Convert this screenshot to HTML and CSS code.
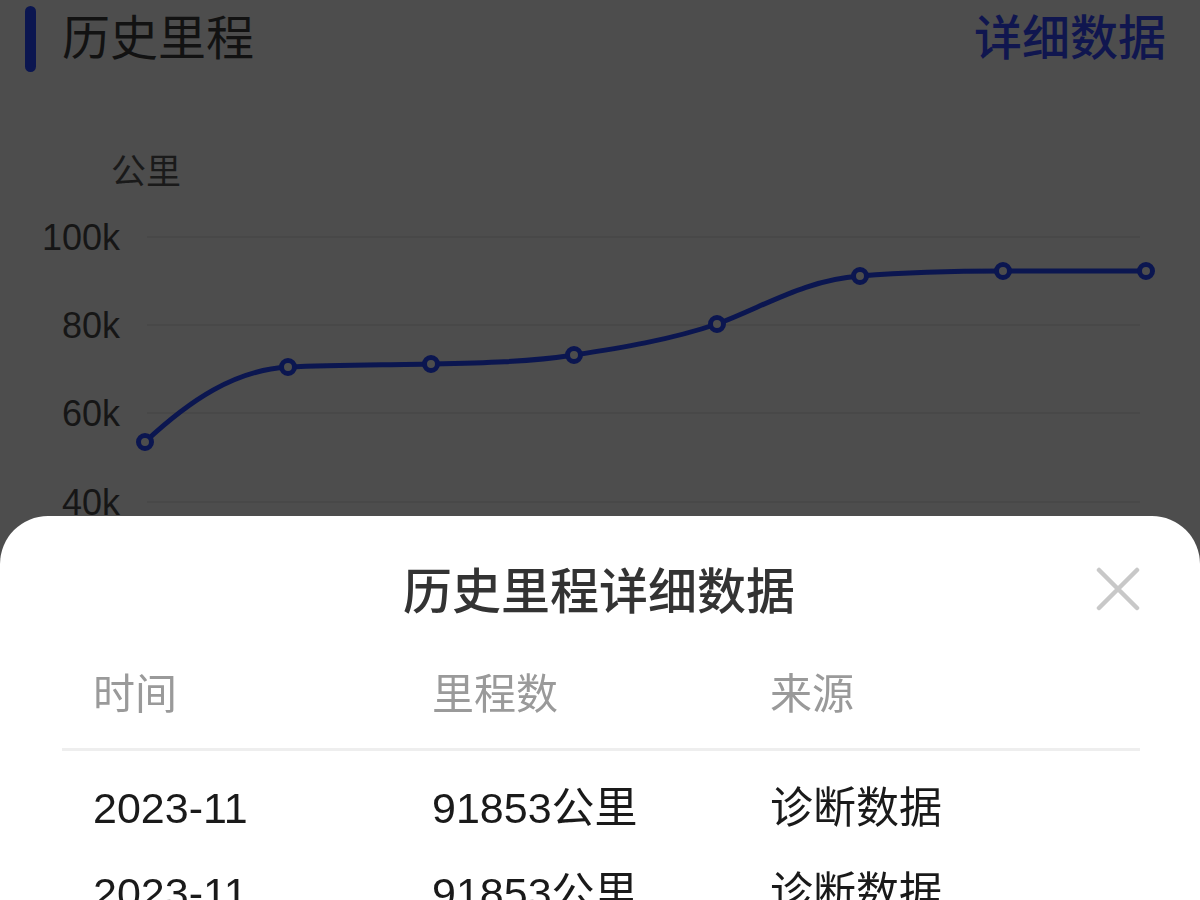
FILE: index.html
```html
<!DOCTYPE html>
<html lang="zh-CN">
<head>
<meta charset="utf-8">
<title>历史里程</title>
<link rel="stylesheet" href="styles.css">
</head>
<body>
<div class="page">
  <header class="section-head">
    <span class="accent"></span>
    <h1 class="section-title">历史里程</h1>
    <a class="detail-link">详细数据</a>
  </header>

  <div class="chart">
    <div class="unit">公里</div>
    <svg class="chart-svg" width="1200" height="444" viewBox="0 72 1200 444">
      <g class="grid">
        <line x1="147" y1="237" x2="1140" y2="237"/>
        <line x1="147" y1="325" x2="1140" y2="325"/>
        <line x1="147" y1="413" x2="1140" y2="413"/>
        <line x1="147" y1="502" x2="1140" y2="502"/>
      </g>
      <g class="ylabels">
        <text x="120" y="237">100k</text>
        <text x="120" y="325">80k</text>
        <text x="120" y="413">60k</text>
        <text x="120" y="502">40k</text>
      </g>
      <path class="series" d="M145,442 C190,400 235,370 288,367 C335,365 385,365 431,364 C480,363 530,362 574,355 C620,348 670,340 717,324 C765,306 805,280 860,276 C910,272 960,271 1003,271 L1146,271"/>
      <g class="dots">
        <circle cx="145" cy="442" r="6.5"/>
        <circle cx="288" cy="367" r="6.5"/>
        <circle cx="431" cy="364" r="6.5"/>
        <circle cx="574" cy="355" r="6.5"/>
        <circle cx="717" cy="324" r="6.5"/>
        <circle cx="860" cy="276" r="6.5"/>
        <circle cx="1003" cy="271" r="6.5"/>
        <circle cx="1146" cy="271" r="6.5"/>
      </g>
    </svg>
  </div>
</div>

<section class="sheet">
  <div class="sheet-head">
    <h2 class="sheet-title">历史里程详细数据</h2>
    <button class="close" aria-label="关闭">
      <svg width="44" height="44" viewBox="0 0 44 44">
        <path d="M3 3 L41 41 M41 3 L3 41"/>
      </svg>
    </button>
  </div>
  <div class="table">
    <div class="row head-row">
      <div class="cell">时间</div>
      <div class="cell">里程数</div>
      <div class="cell">来源</div>
    </div>
    <div class="row">
      <div class="cell">2023-11</div>
      <div class="cell">91853公里</div>
      <div class="cell">诊断数据</div>
    </div>
    <div class="row">
      <div class="cell">2023-11</div>
      <div class="cell">91853公里</div>
      <div class="cell">诊断数据</div>
    </div>
  </div>
</section>
</body>
</html>
```

FILE: styles.css
```css
html, body {
  margin: 0;
  padding: 0;
  width: 1200px;
  height: 900px;
  overflow: hidden;
  background: #4d4d4d;
  font-family: "Liberation Sans", "Noto Sans CJK SC", sans-serif;
}

.page {
  width: 1200px;
}

.section-head {
  display: flex;
  align-items: center;
  height: 66px;
  padding: 6px 34px 0 25px;
}

.accent {
  width: 11px;
  height: 66px;
  border-radius: 6px;
  background: #0b1650;
  flex: none;
}

.section-title {
  margin: 0 0 0 26px;
  font-size: 48px;
  font-weight: 400;
  line-height: 66px;
  color: #121212;
  flex: 1;
}

.detail-link {
  font-size: 48px;
  line-height: 66px;
  font-weight: 500;
  color: #10164f;
}

.chart {
  position: relative;
  height: 444px;
}

.unit {
  position: absolute;
  left: 111px;
  top: 78px;
  font-size: 35px;
  line-height: 44px;
  color: #1a1a1a;
}

.chart-svg {
  display: block;
}

.grid line {
  stroke: #484848;
  stroke-width: 2;
}

.ylabels text {
  font-family: "Liberation Sans", sans-serif;
  font-size: 36px;
  fill: #161616;
  text-anchor: end;
  dominant-baseline: central;
}

.series {
  fill: none;
  stroke: #0b1650;
  stroke-width: 5;
  stroke-linecap: round;
}

.dots circle {
  fill: #4d4d4d;
  stroke: #0b1650;
  stroke-width: 5;
}

.sheet {
  position: fixed;
  left: 0;
  right: 0;
  top: 516px;
  bottom: 0;
  background: #ffffff;
  border-radius: 48px 48px 0 0;
  padding: 0 60px 0 62px;
}

.sheet-head {
  position: relative;
  padding-top: 46px;
  height: 60px;
}

.sheet-title {
  margin: 0 0 0 -4px;
  text-align: center;
  font-size: 49px;
  font-weight: 500;
  line-height: 60px;
  color: #333333;
}

.close {
  position: absolute;
  right: 0;
  top: 51px;
  width: 44px;
  height: 44px;
  padding: 0;
  border: none;
  background: none;
}

.close svg {
  display: block;
}

.close path {
  stroke: #c8c8c8;
  stroke-width: 4.5;
  stroke-linecap: round;
  fill: none;
}

.table {
  margin-top: 43px;
}

.row {
  display: grid;
  grid-template-columns: 339px 338px 1fr;
  height: 85px;
  align-items: center;
}

.head-row {
  height: 60px;
  padding-bottom: 23px;
  border-bottom: 3px solid #eeeeee;
  margin-bottom: 14px;
}

.cell {
  padding-left: 31px;
  font-size: 43px;
  line-height: 60px;
  color: #1a1a1a;
}

.head-row .cell {
  font-size: 42px;
  color: #9a9a9a;
}
```
